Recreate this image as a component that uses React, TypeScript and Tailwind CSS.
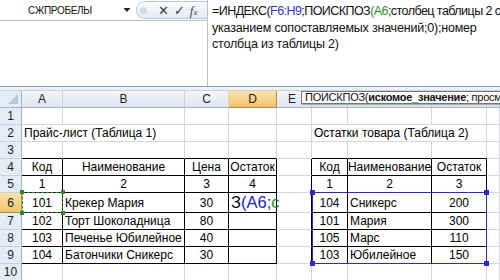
import React from "react";

type Cell = { t: string; a?: "l" | "c"; span?: number };

const COLS = ["A", "B", "C", "D", "E", "F", "G", "H", "I"];

const DATA: Record<string, Cell> = {
  "2-1": { t: "Прайс-лист (Таблица 1)", a: "l", span: 2 },
  "2-6": { t: "Остатки товара (Таблица 2)", a: "l", span: 3 },
  "4-1": { t: "Код" },
  "4-2": { t: "Наименование" },
  "4-3": { t: "Цена" },
  "4-4": { t: "Остаток" },
  "4-6": { t: "Код" },
  "4-7": { t: "Наименование" },
  "4-8": { t: "Остаток" },
  "5-1": { t: "1" },
  "5-2": { t: "2" },
  "5-3": { t: "3" },
  "5-4": { t: "4" },
  "5-6": { t: "1" },
  "5-7": { t: "2" },
  "5-8": { t: "3" },
  "6-1": { t: "101" },
  "6-2": { t: "Крекер Мария", a: "l" },
  "6-3": { t: "30" },
  "6-6": { t: "104" },
  "6-7": { t: "Сникерс", a: "l" },
  "6-8": { t: "200" },
  "7-1": { t: "102" },
  "7-2": { t: "Торт Шоколадница", a: "l" },
  "7-3": { t: "80" },
  "7-6": { t: "101" },
  "7-7": { t: "Мария", a: "l" },
  "7-8": { t: "300" },
  "8-1": { t: "103" },
  "8-2": { t: "Печенье Юбилейное", a: "l" },
  "8-3": { t: "40" },
  "8-6": { t: "105" },
  "8-7": { t: "Марс", a: "l" },
  "8-8": { t: "110" },
  "9-1": { t: "104" },
  "9-2": { t: "Батончики Сникерс", a: "l" },
  "9-3": { t: "30" },
  "9-6": { t: "103" },
  "9-7": { t: "Юбилейное", a: "l" },
  "9-8": { t: "150" },
};

function inTable(r: number, c: number) {
  if (r < 4 || r > 9) return false;
  return (c >= 1 && c <= 4) || (c >= 6 && c <= 8);
}

function FormulaBar() {
  return (
    <div className="flex h-[87px] border-b border-[#8e9cb0] bg-white">
      <div className="w-[207px] shrink-0 flex flex-col">
        <div className="h-[21px] flex items-center border-b border-[#b6c2d2]">
          <div className="w-[120px] shrink-0 text-center text-[10px] tracking-[-0.3px] text-[#111]">
            СЖПРОБЕЛЫ
          </div>
          <svg width="8" height="6" viewBox="0 0 8 6" className="shrink-0 ml-[3px]">
            <path d="M0.5 1 H7.5 L4 5 Z" fill="#222" />
          </svg>
          <div className="ml-[5px] h-[18px] w-[71px] shrink-0 flex items-center gap-[5px] rounded-l-full border border-r-0 border-[#b8c8dc] bg-gradient-to-b from-[#fbfcfe] to-[#e3eaf3] pl-[3px]">
            <div className="shrink-0 mr-[6px] w-[7px] h-[7px] rounded-full bg-[#d3dce7]" />
            <span className="text-[13px] leading-none font-bold text-[#3c3c3c] font-['DejaVu_Sans',sans-serif]">
              ✕
            </span>
            <span className="text-[13px] leading-none font-bold text-[#3c3c3c] font-['DejaVu_Sans',sans-serif]">
              ✓
            </span>
            <span className="text-[13px] italic text-[#444] font-['Liberation_Serif',serif] leading-none">
              f<span className="text-[9px]">x</span>
            </span>
          </div>
        </div>
      </div>
      <div className="flex-1 min-w-0 border-l border-[#b6c2d2] pl-[4px] pt-[3px] text-[12.5px] leading-[16.5px] text-[#111] font-['Liberation_Sans',Arial,sans-serif] whitespace-nowrap overflow-hidden tracking-[-0.2px]">
        <div className="tracking-[-0.55px]">
          =ИНДЕКС(<span className="text-[#3232e6]">F6:H9</span>;ПОИСКПОЗ
          <span className="text-[#2e8b2e]">(A6</span>;столбец таблицы 2 с
        </div>
        <div>указанием сопоставляемых значений;0);номер</div>
        <div>столбца из таблицы 2)</div>
      </div>
    </div>
  );
}

function ColHeader() {
  return (
    <>
      <div className="relative border-r border-b border-[#9eb6ce] bg-[#e4ecf7]">
        <svg width="12" height="12" viewBox="0 0 12 12" className="absolute right-[2px] bottom-[2px]">
          <path d="M11 1 L11 11 L1 11 Z" fill="#b9c8d9" />
        </svg>
      </div>
      {COLS.map((c) =>
        c === "D" ? (
          <div
            key={c}
            className="flex items-center justify-center border-r border-b border-[#c28a30] bg-gradient-to-b from-[#fbe2b0] to-[#f3c46a] text-[#222]"
          >
            {c}
          </div>
        ) : (
          <div
            key={c}
            className={
              "flex items-center border-r border-b border-r-[#c5d2e0] border-b-[#9eb6ce] bg-gradient-to-b from-[#f3f6fb] to-[#dfe6ef] text-[#222] " +
              (c === "E" ? "justify-start pl-[11px]" : "justify-center")
            }
          >
            {c}
          </div>
        )
      )}
    </>
  );
}

function Sheet() {
  const cells: React.ReactNode[] = [];
  for (let r = 1; r <= 10; r++) {
    cells.push(
      <div
        key={`h${r}`}
        className={
          r === 6
            ? "flex items-center justify-center border-r border-b border-[#c28a30] bg-gradient-to-b from-[#fbe2b0] to-[#f3c46a] text-[#222]"
            : "flex items-center justify-center border-r border-b border-r-[#9eb6ce] border-b-[#c5d2e0] bg-[#e4ecf7] text-[#222]"
        }
      >
        {r}
      </div>
    );
    let c = 1;
    while (c <= 9) {
      const d = DATA[`${r}-${c}`];
      const span = d?.span ?? 1;
      const last = c + span - 1;
      const rb = inTable(r, last) || inTable(r, last + 1);
      const bb = inTable(r, c) || inTable(r + 1, c);
      const cls =
        "flex items-center overflow-visible whitespace-nowrap border-r border-b " +
        (rb ? "border-r-black " : "border-r-[#d0d7e5] ") +
        (bb ? "border-b-black " : "border-b-[#d0d7e5] ") +
        (span === 2 ? "col-span-2 " : span === 3 ? "col-span-3 " : "");
      if (r === 6 && c === 4) {
        cells.push(
          <div key={`${r}-${c}`} className={cls + "justify-start pl-[2px] text-[16.5px] leading-none"}>
            <span>З</span>
            <span className="text-[#2323c8]">(A6;</span>
            <span className="text-[#1f8f1f]">с</span>
          </div>
        );
      } else {
        cells.push(
          <div
            key={`${r}-${c}`}
            className={cls + (d?.a === "l" ? "justify-start pl-[2px]" : "justify-center")}
          >
            {d?.t}
          </div>
        );
      }
      c += span;
    }
  }
  return (
    <div className="relative">
      <div className="grid grid-cols-[22px_41px_122px_44px_48px_35px_36px_84px_55px_13px] grid-rows-[17px_17px_17px_17px_17px_17px_20px_17px_17px_17px_17px] text-[12px] text-black font-['Liberation_Sans',Arial,sans-serif]">
        <ColHeader />
        {cells}
      </div>
      {/* formula tooltip */}
      <div className="absolute left-[301px] top-0 h-[13px] w-[220px] flex items-center border border-[#767676] bg-[#fdfdfd] pl-[3px] text-[11px] tracking-[-0.25px] leading-none text-[#111] whitespace-nowrap font-['Liberation_Sans',Arial,sans-serif] shadow-[1px_1px_1px_rgba(0,0,0,0.25)]">
        ПОИСКПОЗ(<b>искомое_значение</b>; просматриваемый_массив
      </div>
      {/* copy marquee around A6 */}
      <div className="absolute left-[22px] top-[101px] w-[41px] h-[21px] border-[1.5px] border-dashed border-[#2b8a2b]">
        <div className="absolute -left-[3px] -top-[3px] w-[4px] h-[4px] bg-[#2b8a2b]" />
        <div className="absolute -right-[3px] -top-[3px] w-[4px] h-[4px] bg-[#2b8a2b]" />
        <div className="absolute -left-[3px] -bottom-[3px] w-[4px] h-[4px] bg-[#2b8a2b]" />
        <div className="absolute -right-[3px] -bottom-[3px] w-[4px] h-[4px] bg-[#2b8a2b]" />
      </div>
      {/* referenced range F6:H9 */}
      <div className="absolute left-[312px] top-[101px] w-[175px] h-[72px] border-[1.5px] border-[#2a2ad0]">
        <div className="absolute -left-[3px] -top-[3px] w-[5px] h-[5px] bg-[#2a2ad0]" />
        <div className="absolute -right-[3px] -top-[3px] w-[5px] h-[5px] bg-[#2a2ad0]" />
        <div className="absolute -left-[3px] -bottom-[3px] w-[5px] h-[5px] bg-[#2a2ad0]" />
        <div className="absolute -right-[3px] -bottom-[3px] w-[5px] h-[5px] bg-[#2a2ad0]" />
      </div>
    </div>
  );
}

export default function App() {
  return (
    <div className="w-[500px] h-[280px] overflow-hidden bg-white font-['Liberation_Sans',Arial,sans-serif]">
      <FormulaBar />
      <div className="h-[4px] bg-[#eef1f5] border-b border-[#c9d3df]" />
      <Sheet />
    </div>
  );
}
